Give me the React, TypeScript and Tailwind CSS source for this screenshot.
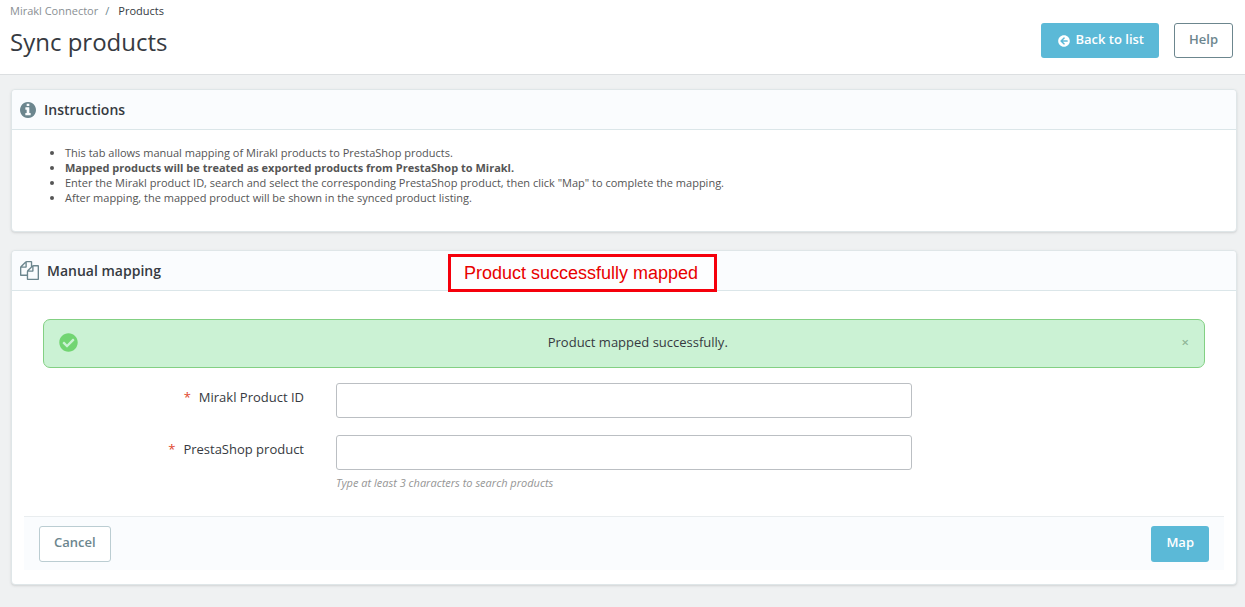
import type { ReactNode } from "react";
import { FaArrowCircleLeft, FaCheckCircle } from "react-icons/fa";

const instructions = [
  { text: "This tab allows manual mapping of Mirakl products to PrestaShop products.", strong: false },
  { text: "Mapped products will be treated as exported products from PrestaShop to Mirakl.", strong: true },
  {
    text: 'Enter the Mirakl product ID, search and select the corresponding PrestaShop product, then click "Map" to complete the mapping.',
    strong: false,
  },
  { text: "After mapping, the mapped product will be shown in the synced product listing.", strong: false },
];

function InfoIcon() {
  return (
    <svg viewBox="128 128 1536 1536" className="size-4" fill="currentColor" aria-hidden="true">
      <path d="M1152 1376v-160q0-14-9-23t-23-9h-96v-512q0-14-9-23t-23-9h-320q-14 0-23 9t-9 23v160q0 14 9 23t23 9h96v320h-96q-14 0-23 9t-9 23v160q0 14 9 23t23 9h448q14 0 23-9t9-23zm-128-896v-160q0-14-9-23t-23-9h-192q-14 0-23 9t-9 23v160q0 14 9 23t23 9h192q14 0 23-9t9-23zm640 416q0 209-103 385.5t-279.5 279.5-385.5 103-385.5-103-279.5-279.5-103-385.5 103-385.5 279.5-279.5 385.5-103 385.5 103 279.5 279.5 103 385.5z" />
    </svg>
  );
}

function FilesIcon() {
  return (
    <svg viewBox="0 0 1792 1792" className="size-[19px]" fill="currentColor" aria-hidden="true">
      <path d="M1696 384q40 0 68 28t28 68v1216q0 40-28 68t-68 28h-960q-40 0-68-28t-28-68v-288h-544q-40 0-68-28t-28-68v-672q0-40 20-88t48-76l408-408q28-28 76-48t88-20h416q40 0 68 28t28 68v328q68-40 128-40h416zm-544 213l-299 299h299v-299zm-640-384l-299 299h299v-299zm196 647l316-316v-416h-384v416q0 40-28 68t-68 28h-416v640h512v-256q0-40 20-88t48-76zm956 804v-1152h-384v416q0 40-28 68t-68 28h-416v640h896z" />
    </svg>
  );
}

interface PanelProps {
  icon: ReactNode;
  title: string;
  children: ReactNode;
}

function Panel({ icon, title, children }: PanelProps) {
  return (
    <section className="rounded border border-[#dfe6e8] bg-white shadow-sm">
      <div className="flex h-10 items-center gap-2 rounded-t border-b border-[#dbe6e9] bg-[#fafcfe] px-2 text-[#6c868e]">
        {icon}
        <h2 className="text-sm font-semibold text-[#363a41]">{title}</h2>
      </div>
      {children}
    </section>
  );
}

interface FieldProps {
  id: string;
  label: string;
  hint?: string;
}

function Field({ id, label, hint }: FieldProps) {
  return (
    <div className="grid grid-cols-12">
      <label htmlFor={id} className="col-span-3 px-[17px] pt-1 text-right text-[13px] leading-5 text-[#363a41]">
        <span className="mr-2 text-[#e0462c]">*</span>
        {label}
      </label>
      <div className="col-span-6 px-[15px]">
        <input
          id={id}
          type="text"
          className="block h-[35px] w-full rounded-[3px] border border-[#bbbfc3] bg-white px-2 text-[13px] outline-none"
        />
        {hint && <p className="pt-[5px] text-[11px] leading-4 text-[#959595] italic">{hint}</p>}
      </div>
    </div>
  );
}

export default function App() {
  return (
    <div className="min-h-screen bg-[#eff1f2] font-['Open_Sans','Noto_Sans',sans-serif] text-[#363a41]">
      <header className="flex justify-between border-b border-[#dcdfe1] bg-white pr-3 pb-4 pl-[10px]">
        <div>
          <nav aria-label="Breadcrumb" className="flex gap-[7px] pt-[3px] text-[11px] leading-4">
            <a href="#connector" className="text-[#8a8f94]">Mirakl Connector</a>
            <span className="text-[#6c868e]">/</span>
            <a href="#products" className="pl-[2px] text-[#363a41]">Products</a>
          </nav>
          <h1 className="pt-[7px] text-2xl leading-8">Sync products</h1>
        </div>
        <div className="flex gap-[15px] pt-[23px]">
          <a
            href="#list"
            className="flex h-[35px] items-center gap-[5px] rounded-[3px] bg-[#5bb9d7] pr-[15px] pb-[2px] pl-[17px] text-[13px] font-semibold text-white"
          >
            <FaArrowCircleLeft className="mt-[2px] size-3" />
            Back to list
          </a>
          <button
            type="button"
            className="h-[35px] rounded-[3px] border border-[#6c868e] bg-white px-[14px] pb-[2px] text-[13px] font-semibold text-[#6c868e]"
          >
            Help
          </button>
        </div>
      </header>

      <main className="flex flex-col gap-[18px] px-2 pt-[14px] pb-[22px] pl-[11px]">
        <Panel icon={<InfoIcon />} title="Instructions">
          <ul className="list-disc pt-[15px] pb-[26px] pl-[53px] text-[11px] leading-[15px] text-[#555]">
            {instructions.map(({ text, strong }) => (
              <li key={text} className={strong ? "font-bold" : ""}>
                {text}
              </li>
            ))}
          </ul>
        </Panel>

        <div className="relative">
          <Panel icon={<FilesIcon />} title="Manual mapping">
            <form onSubmit={(e) => e.preventDefault()}>
              <div
                role="status"
                className="mx-[31px] mt-7 mb-[15px] flex h-[49px] items-center rounded-[7px] border border-[#83d083] bg-[#cbf2d4] px-[15px] pb-[2px]"
              >
                <FaCheckCircle className="size-[19px] text-[#72d572]" />
                <p className="flex-1 pl-4 text-center text-[13px]">Product mapped successfully.</p>
                <button type="button" aria-label="Close" className="text-[13px] font-semibold text-[#8fb597]">
                  ×
                </button>
              </div>

              <div className="flex flex-col gap-[17px] px-[6px]">
                <Field id="mirakl-id" label="Mirakl Product ID" />
                <Field id="ps-product" label="PrestaShop product" hint="Type at least 3 characters to search products" />
              </div>

              <div className="mx-3 mt-[25px] mb-[14px] flex justify-between border-t border-[#e9edef] bg-[#fafcfe] px-[15px] pt-[9px] pb-2">
                <button
                  type="button"
                  className="h-9 rounded-[3px] border border-[#bbcdd2] bg-white px-[14px] pb-[2px] text-[13px] font-semibold text-[#6c868e]"
                >
                  Cancel
                </button>
                <button
                  type="submit"
                  className="h-9 rounded-[3px] bg-[#5bb9d7] px-[15px] pb-[2px] text-[13px] font-semibold text-white"
                >
                  Map
                </button>
              </div>
            </form>
          </Panel>

          {/* callout drawn over the panel heading */}
          <div className="absolute top-1 left-[437px] border-3 border-[#f5000c] bg-white/60 py-1 pr-4 pl-[13px] font-['Liberation_Sans',sans-serif] text-lg leading-6 text-[#e80000]">
            Product successfully mapped
          </div>
        </div>
      </main>
    </div>
  );
}
